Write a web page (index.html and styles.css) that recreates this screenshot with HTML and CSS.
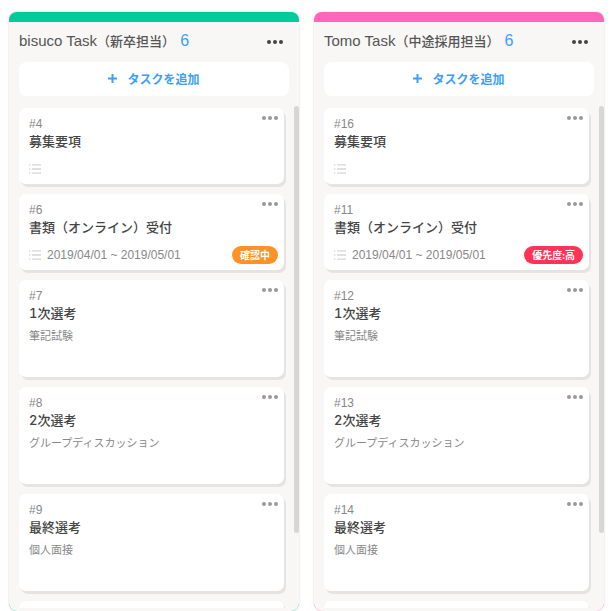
FILE: index.html
```html
<!DOCTYPE html>
<html lang="ja">
<head>
  <meta charset="utf-8">
  <title>タスクボード</title>
  <link rel="stylesheet" href="styles.css">
</head>
<body>
  <svg class="defs" width="0" height="0" aria-hidden="true">
    <symbol id="dots" viewBox="0 0 16 4"><circle cx="2" cy="2" r="2"/><circle cx="8" cy="2" r="2"/><circle cx="14" cy="2" r="2"/></symbol>
    <symbol id="plus" viewBox="0 0 9 9"><path d="M3.5 0h2v3.5H9v2H5.5V9h-2V5.5H0v-2h3.5z"/></symbol>
    <symbol id="list" viewBox="0 0 12 10"><path d="M0 .2h1.3v1.4H0zM3 .2h9v1.4H3zM0 4.3h1.3v1.4H0zM3 4.3h9v1.4H3zM0 8.4h1.3v1.4H0zM3 8.4h9v1.4H3z"/></symbol>
  </svg>

  <main class="board">
    <section class="column green">
      <div class="column-body">
        <header class="column-header">
          <h2 class="column-title"><span class="name">bisuco Task</span>（新卒担当）<span class="count">6</span></h2>
          <button class="menu" aria-label="メニュー"><svg class="icon-dots"><use href="#dots"/></svg></button>
        </header>
        <button class="add"><svg class="icon-plus"><use href="#plus"/></svg>タスクを追加</button>
        <div class="scroll">
          <div class="cards">
            <article class="card">
              <div class="card-id">#4</div>
              <h3 class="card-title">募集要項</h3>
              <div class="card-footer"><svg class="icon-list"><use href="#list"/></svg></div>
              <button class="menu card-menu" aria-label="メニュー"><svg class="icon-dots"><use href="#dots"/></svg></button>
            </article>
            <article class="card">
              <div class="card-id">#6</div>
              <h3 class="card-title">書類（オンライン）受付</h3>
              <div class="card-footer"><svg class="icon-list"><use href="#list"/></svg><span class="date">2019/04/01 ~ 2019/05/01</span><span class="tag checking">確認中</span></div>
              <button class="menu card-menu" aria-label="メニュー"><svg class="icon-dots"><use href="#dots"/></svg></button>
            </article>
            <article class="card">
              <div class="card-id">#7</div>
              <h3 class="card-title">1次選考</h3>
              <p class="card-text">筆記試験</p>
              <button class="menu card-menu" aria-label="メニュー"><svg class="icon-dots"><use href="#dots"/></svg></button>
            </article>
            <article class="card">
              <div class="card-id">#8</div>
              <h3 class="card-title">2次選考</h3>
              <p class="card-text">グループディスカッション</p>
              <button class="menu card-menu" aria-label="メニュー"><svg class="icon-dots"><use href="#dots"/></svg></button>
            </article>
            <article class="card">
              <div class="card-id">#9</div>
              <h3 class="card-title">最終選考</h3>
              <p class="card-text">個人面接</p>
              <button class="menu card-menu" aria-label="メニュー"><svg class="icon-dots"><use href="#dots"/></svg></button>
            </article>
            <article class="card"></article>
          </div>
          <span class="thumb"></span>
        </div>
      </div>
    </section>

    <section class="column pink">
      <div class="column-body">
        <header class="column-header">
          <h2 class="column-title"><span class="name">Tomo Task</span>（中途採用担当）<span class="count">6</span></h2>
          <button class="menu" aria-label="メニュー"><svg class="icon-dots"><use href="#dots"/></svg></button>
        </header>
        <button class="add"><svg class="icon-plus"><use href="#plus"/></svg>タスクを追加</button>
        <div class="scroll">
          <div class="cards">
            <article class="card">
              <div class="card-id">#16</div>
              <h3 class="card-title">募集要項</h3>
              <div class="card-footer"><svg class="icon-list"><use href="#list"/></svg></div>
              <button class="menu card-menu" aria-label="メニュー"><svg class="icon-dots"><use href="#dots"/></svg></button>
            </article>
            <article class="card">
              <div class="card-id">#11</div>
              <h3 class="card-title">書類（オンライン）受付</h3>
              <div class="card-footer"><svg class="icon-list"><use href="#list"/></svg><span class="date">2019/04/01 ~ 2019/05/01</span><span class="tag high">優先度:高</span></div>
              <button class="menu card-menu" aria-label="メニュー"><svg class="icon-dots"><use href="#dots"/></svg></button>
            </article>
            <article class="card">
              <div class="card-id">#12</div>
              <h3 class="card-title">1次選考</h3>
              <p class="card-text">筆記試験</p>
              <button class="menu card-menu" aria-label="メニュー"><svg class="icon-dots"><use href="#dots"/></svg></button>
            </article>
            <article class="card">
              <div class="card-id">#13</div>
              <h3 class="card-title">2次選考</h3>
              <p class="card-text">グループディスカッション</p>
              <button class="menu card-menu" aria-label="メニュー"><svg class="icon-dots"><use href="#dots"/></svg></button>
            </article>
            <article class="card">
              <div class="card-id">#14</div>
              <h3 class="card-title">最終選考</h3>
              <p class="card-text">個人面接</p>
              <button class="menu card-menu" aria-label="メニュー"><svg class="icon-dots"><use href="#dots"/></svg></button>
            </article>
            <article class="card"></article>
          </div>
          <span class="thumb"></span>
        </div>
      </div>
    </section>
  </main>
</body>
</html>
```

FILE: styles.css
```css
* { box-sizing: border-box; }
body { margin: 0; background: #fff; color: #444; font-family: Inter, "Noto Sans CJK JP", sans-serif; font-size: 13px; font-variant-numeric: tabular-nums; }
h2, h3, p { margin: 0; }
button { border: none; font-family: inherit; cursor: pointer; }
svg { display: block; fill: currentColor; }
.defs { position: absolute; }

.board { display: grid; grid-template-columns: 1fr 1fr; gap: 15px; height: 100vh; padding: 12px 10px 0 9px; }
.column { display: flex; min-width: 0; min-height: 0; padding-top: 10px; border-radius: 8px; box-shadow: 0 0 2px rgba(0,0,0,0.2); }
.green { background: #00cc99; }
.pink { background: #ff66bb; }
.column-body { flex: 1; display: flex; flex-direction: column; min-width: 0; padding-bottom: 3px; background: #f8f7f5; border-radius: 0 0 8px 8px; }

.column-header { display: flex; align-items: center; justify-content: space-between; height: 40px; padding: 0 16px 0 10px; }
.column-title { padding-bottom: 2px; font-size: 13px; font-weight: 500; line-height: 20px; white-space: nowrap; color: #555; }
.name, .count, .card-id, .date { font-family: "Liberation Sans", sans-serif; }
.name { font-size: 15px; }
.count { margin-left: 5px; font-size: 16px; color: #3aa0fa; }
.menu { padding: 0; background: none; color: #444; }
.icon-dots { width: 16px; height: 4px; }
.add { display: flex; align-items: center; justify-content: center; gap: 10px; height: 34px; margin: 0 10px; padding: 0 0 2px; border-radius: 8px; background: #fff; color: #3aa0fa; font-size: 12px; font-weight: 700; }
.icon-plus { width: 9px; height: 9px; }

.scroll { position: relative; flex: 1; min-height: 0; margin-top: 10px; }
.cards { display: flex; flex-direction: column; gap: 10px; height: 100%; padding: 2px 15px 0 10px; overflow: hidden; }
.thumb { position: absolute; top: 0; right: 0; width: 5px; height: 85%; border-radius: 3px; background: #d6d6d6; }

.card { position: relative; flex: none; min-height: 76px; padding: 10px 6px 6px 10px; border-radius: 7px; background: #fff; box-shadow: 2px 3px 0 #e5e4e2; }
.card-id { font-size: 12px; line-height: 12px; color: #888; }
.card-title { font-size: 13px; font-weight: 500; line-height: 22px; color: #444; }
.card-text { min-height: 42px; margin-top: 5px; font-size: 11px; line-height: 14px; color: #888; }
.card-footer { display: flex; align-items: center; height: 18px; margin-top: 8px; }
.card-menu { position: absolute; top: 8px; right: 6px; color: #999; }
.icon-list { width: 12px; height: 10px; color: #d6d6d6; }
.date { margin-left: 6px; font-size: 12px; color: #888; white-space: nowrap; }
.tag { margin-left: auto; padding: 0 8px; border-radius: 9px; color: #fff; font-size: 10px; font-weight: 700; line-height: 18px; white-space: nowrap; }
.checking { background: #ff9224; }
.high { background: #ff3355; }
```
